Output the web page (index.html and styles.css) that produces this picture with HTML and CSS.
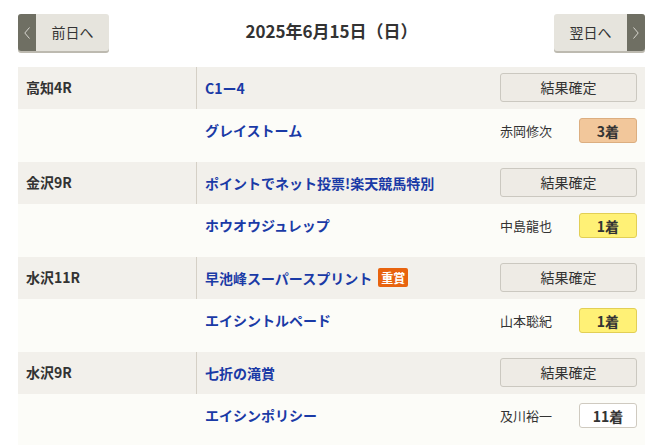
FILE: index.html
```html
<!DOCTYPE html>
<html lang="ja">
<head>
<meta charset="UTF-8">
<meta name="viewport" content="width=device-width, initial-scale=1.0">
<title>2025年6月15日（日）</title>
<link rel="stylesheet" href="styles.css">
</head>
<body>
<div class="page">
  <div class="day-nav">
    <a class="nav-btn prev" href="#">
      <span class="arrow"><svg width="6" height="12" viewBox="0 0 6 12"><path d="M5.5 0.5 L0.8 6 L5.5 11.5" fill="none" stroke="#d8d6cf" stroke-width="1"/></svg></span>
      <span class="label">前日へ</span>
    </a>
    <h2 class="day-title">2025年6月15日（日）</h2>
    <a class="nav-btn next" href="#">
      <span class="label">翌日へ</span>
      <span class="arrow"><svg width="6" height="12" viewBox="0 0 6 12"><path d="M0.5 0.5 L5.2 6 L0.5 11.5" fill="none" stroke="#d8d6cf" stroke-width="1"/></svg></span>
    </a>
  </div>

  <div class="race">
    <div class="race-head">
      <div class="place">高知4R</div>
      <div class="race-main">
        <a class="race-name" href="#">C1ー4</a>
        <button class="result-btn">結果確定</button>
      </div>
    </div>
    <div class="race-horse">
      <div class="place"></div>
      <div class="race-main">
        <a class="horse-name" href="#">グレイストーム</a>
        <div class="finish">
          <span class="jockey">赤岡修次</span>
          <span class="rank rank-3">3着</span>
        </div>
      </div>
    </div>
  </div>

  <div class="race">
    <div class="race-head">
      <div class="place">金沢9R</div>
      <div class="race-main">
        <a class="race-name" href="#">ポイントでネット投票!楽天競馬特別</a>
        <button class="result-btn">結果確定</button>
      </div>
    </div>
    <div class="race-horse">
      <div class="place"></div>
      <div class="race-main">
        <a class="horse-name" href="#">ホウオウジュレップ</a>
        <div class="finish">
          <span class="jockey">中島龍也</span>
          <span class="rank rank-1">1着</span>
        </div>
      </div>
    </div>
  </div>

  <div class="race">
    <div class="race-head">
      <div class="place">水沢11R</div>
      <div class="race-main">
        <a class="race-name" href="#">早池峰スーパースプリント<span class="grade">重賞</span></a>
        <button class="result-btn">結果確定</button>
      </div>
    </div>
    <div class="race-horse">
      <div class="place"></div>
      <div class="race-main">
        <a class="horse-name" href="#">エイシントルペード</a>
        <div class="finish">
          <span class="jockey">山本聡紀</span>
          <span class="rank rank-1">1着</span>
        </div>
      </div>
    </div>
  </div>

  <div class="race">
    <div class="race-head">
      <div class="place">水沢9R</div>
      <div class="race-main">
        <a class="race-name" href="#">七折の滝賞</a>
        <button class="result-btn">結果確定</button>
      </div>
    </div>
    <div class="race-horse">
      <div class="place"></div>
      <div class="race-main">
        <a class="horse-name" href="#">エイシンポリシー</a>
        <div class="finish">
          <span class="jockey">及川裕一</span>
          <span class="rank">11着</span>
        </div>
      </div>
    </div>
  </div>
</div>
</body>
</html>
```

FILE: styles.css
```css
body {
  margin: 0;
  font-family: "Noto Sans CJK JP", "Noto Sans", sans-serif;
  color: #333;
  background: #fff;
}
.page { padding: 13px 7px 0 18px; }

.day-nav {
  display: flex;
  justify-content: space-between;
  align-items: center;
  height: 39px;
  margin-bottom: 15px;
}
.day-title {
  margin: 0 0 4px;
  font-size: 17px;
  font-weight: bold;
  color: #333;
}
.nav-btn {
  display: flex;
  width: 91px;
  height: 37px;
  background: #e6e4dd;
  border-radius: 3px;
  box-shadow: 0 2px 0 #bdbab0;
  text-decoration: none;
  color: #333;
  font-size: 14px;
  overflow: hidden;
}
.nav-btn .arrow {
  width: 18px;
  background: #6f6f63;
  display: flex;
  align-items: center;
  justify-content: center;
}
.nav-btn .label {
  flex: 1;
  display: flex;
  align-items: center;
  justify-content: center;
  padding-bottom: 2px;
}

.race-head, .race-horse { display: flex; }
.race-head { height: 42px; background: #f2f0eb; }
.race-horse { height: 53px; background: #fcfcf8; }
.place {
  width: 179px;
  padding-left: 8px;
  padding-bottom: 2px;
  box-sizing: border-box;
  font-size: 14px;
  font-weight: bold;
  color: #333;
  display: flex;
  align-items: center;
}
.race-head .place { border-right: 1px solid #d5d0c6; }
.race-main {
  flex: 1;
  display: flex;
  justify-content: space-between;
  align-items: center;
  padding: 0 8px;
}
.race-horse .race-main {
  align-items: flex-start;
  padding-top: 9px;
}
.race-name, .horse-name {
  color: #1a3aa6;
  font-size: 14px;
  font-weight: bold;
  text-decoration: none;
  display: flex;
  align-items: center;
}
.race-name { padding-bottom: 1px; }
.horse-name { height: 24px; }
.grade {
  background: #e8630e;
  color: #fff;
  font-size: 12px;
  border-radius: 2px;
  padding: 0 3px;
  margin-left: 6px;
  line-height: 19px;
}
.result-btn {
  width: 137px;
  height: 29px;
  margin-top: -1px;
  background: #eeebe5;
  border: 1px solid #cbc8c0;
  border-radius: 3px;
  font-family: inherit;
  font-size: 14px;
  color: #333;
  padding: 0 0 1px;
}
.finish {
  width: 137px;
  display: flex;
  justify-content: space-between;
  align-items: center;
}
.jockey { font-size: 13px; color: #333; }
.rank {
  width: 58px;
  height: 25px;
  box-sizing: border-box;
  border: 1px solid #cfcac0;
  border-radius: 3px;
  background: #fff;
  font-size: 14px;
  font-weight: bold;
  display: flex;
  align-items: center;
  justify-content: center;
}
.rank-3 { background: #f2c79b; border-color: #dcae80; }
.rank-1 { background: #fff176; border-color: #e2cf55; }
```
